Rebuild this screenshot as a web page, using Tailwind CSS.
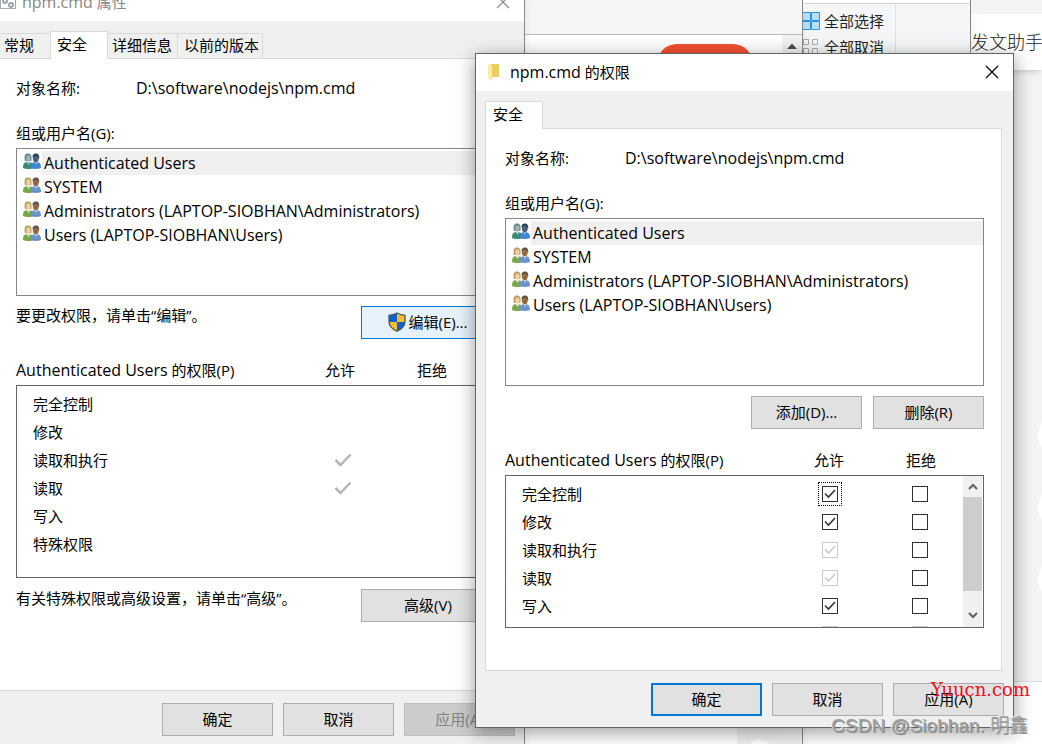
<!DOCTYPE html>
<html lang="zh-CN">
<head>
    <meta charset="UTF-8">
    <meta name="viewport" content="width=device-width, initial-scale=1.0">
    <title>npm.cmd 的权限</title>
    <script src="https://cdn.jsdelivr.net/npm/@tailwindcss/browser@4"></script>
</head>
<body class="relative h-screen overflow-hidden bg-[#f3f4f6] font-['Open_Sans','Noto_Sans_CJK_SC',sans-serif] text-[15px] leading-5 text-black">

    <!-- Shared icons -->
    <svg class="hidden">
        <symbol id="icon-users" viewBox="0 0 18 16">
            <path d="M0 15c0-4 1-6 5-6s6 2 6 6c-3 1.300-8 1.300-11 0z" fill="#7aa650"></path>
            <path d="M3.500 9l2 3 2-3z" fill="#dfe9cf"></path>
            <path d="M2 8C.8 3 2 .5 5 .5S9.200 3 8.300 8z" fill="#b99c55"></path>
            <ellipse cx="5.400" cy="5.500" rx="2.200" ry="3.200" fill="#efcfa6"></ellipse>
            <path d="M8 15c0-4 1-6 4.800-6S18 11 18 15c-3 1.300-7 1.300-10 0z" fill="#6a93cb"></path>
            <path d="M11.500 9l1.500 3 1.500-3z" fill="#c9dcf2"></path>
            <ellipse cx="12.800" cy="5.200" rx="2.900" ry="4" fill="#96683f"></ellipse>
            <path d="M9.300 4.500C9.500 1.500 11 .3 13 .5c2.500 0 3.700 2 3.200 5.500-.7-2-2-3-3.700-3.200-1.200 0-2 .7-3.200 1.700z" fill="#5d544c"></path>
        </symbol>
        <symbol id="icon-users-selected" viewBox="0 0 18 16">
            <path d="M0 15c0-4 1-6 5-6s6 2 6 6c-3 1.300-8 1.300-11 0z" fill="#40897a"></path>
            <path d="M3.500 9l2 3 2-3z" fill="#9fc5cf"></path>
            <path d="M2 8C.8 3 2 .5 5 .5S9.200 3 8.300 8z" fill="#64877f"></path>
            <ellipse cx="5.400" cy="5.500" rx="2.200" ry="3.200" fill="#9fb0b8"></ellipse>
            <path d="M8 15c0-4 1-6 4.800-6S18 11 18 15c-3 1.300-7 1.300-10 0z" fill="#3f86cf"></path>
            <path d="M11.500 9l1.500 3 1.500-3z" fill="#8fc0ec"></path>
            <ellipse cx="12.800" cy="5.200" rx="2.900" ry="4" fill="#4b6077"></ellipse>
            <path d="M9.300 4.500C9.500 1.500 11 .3 13 .5c2.500 0 3.700 2 3.200 5.500-.7-2-2-3-3.700-3.200-1.200 0-2 .7-3.200 1.700z" fill="#24415c"></path>
        </symbol>
        <symbol id="icon-close" viewBox="0 0 14 14">
            <path d="M1 1l12 12M13 1L1 13" fill="none" stroke="currentColor" stroke-width="1.200"></path>
        </symbol>
        <symbol id="icon-check" viewBox="0 0 12 10">
            <path d="M1 4.500l3.500 3.500L11 1" fill="none" stroke="currentColor" stroke-width="1.600"></path>
        </symbol>
    </svg>

    <!-- Web page at the back -->
    <div class="absolute inset-0 flex flex-col">
        <div class="mt-3.5 flex h-14 items-center justify-end bg-white shadow-md">
            <div class="w-[71px] overflow-hidden text-lg font-light whitespace-nowrap text-[#222]">发文助手</div>
        </div>
        <div class="flex flex-1 flex-col items-end gap-8 overflow-hidden pt-[345px]">
            <div class="-mr-9 size-10 rounded-full bg-white"></div>
            <div class="-mr-9 size-10 rounded-full bg-white"></div>
            <div class="-mr-9 size-10 rounded-full bg-white"></div>
        </div>
        <div class="h-[63px] border-t border-[#ddd] bg-white"></div>
    </div>

    <!-- Explorer ribbon -->
    <div class="absolute top-0 left-[790px] flex h-24 w-[181px] flex-col border-r border-[#888] bg-[#f5f6f7] shadow-lg">
        <div class="h-1 border-b border-[#d5d5d5] bg-white"></div>
        <div class="flex flex-1 pl-3">
            <div class="flex w-[94px] flex-col border-r border-[#dfe0e1] text-[#222]">
                <button class="flex h-[26px] items-center gap-1 pt-2">
                    <svg viewBox="0 0 18 18" class="size-[18px]" fill="#b9e0fb" stroke="#2b93e0">
                        <path d="M.5.500h8v8h-8zM9.500.500h8v8h-8zM.5 9.500h8v8h-8zM9.500 9.500h8v8h-8z"></path>
                    </svg>
                    全部选择
                </button>
                <button class="flex h-[26px] items-center gap-1 pt-2">
                    <svg viewBox="0 0 18 18" class="size-[18px]" fill="#fafafa" stroke="#aaa">
                        <path d="M1.500 1.500h5v5h-5zM10.500 1.500h5v5h-5zM1.500 10.500h5v5h-5zM10.500 10.500h5v5h-5z"></path>
                    </svg>
                    全部取消
                </button>
            </div>
        </div>
    </div>

    <!-- Browser window -->
    <div class="absolute inset-y-0 left-[500px] flex w-[303px] flex-col border-r border-[#888] bg-white shadow-lg">
        <div class="h-[35px] border-b border-[#bbb] bg-[#f6f6f6]"></div>
        <div class="flex flex-1 justify-end">
            <div class="mt-[9px] mr-[29px] h-10 w-24 rounded-full bg-[#f4502f]"></div>
            <div class="w-5 bg-[#f1f1f1] pt-2">
                <svg viewBox="0 0 10 6" class="mx-auto h-1.5 w-2.5" fill="#505050"><path d="M0 6l5-5.500L10 6z"></path></svg>
            </div>
        </div>
        <div class="flex h-4 justify-end">
            <div class="flex w-[45px] items-end justify-center overflow-hidden bg-[#eef0f2]">
                <div class="-mb-6 size-7 rounded-full bg-white"></div>
            </div>
            <div class="w-5 bg-[#f1f1f1]"></div>
        </div>
    </div>

    <!-- Properties window -->
    <section class="absolute -top-[18px] -left-[14px] flex w-[539px] flex-col border border-[#888] bg-[#f0f0f0] shadow-lg">
        <header class="flex h-[38px] items-center bg-white pr-3.5 pl-[13px] text-[#888]">
            <svg viewBox="0 0 16 16" class="mr-1.5 size-4">
                <path d="M.5 1.500h15v13H.5z" fill="#fff" stroke="#aaa"></path>
                <circle cx="5" cy="7" r="2" fill="none" stroke="#9aa9b0" stroke-width="2"></circle>
                <circle cx="11" cy="11" r="2" fill="none" stroke="#9aa9b0" stroke-width="2"></circle>
            </svg>
            <h2 class="flex-1"><span class="text-base leading-5">npm.cmd</span> 属性</h2>
            <button aria-label="关闭"><svg class="size-3.5"><use href="#icon-close"></use></svg></button>
        </header>
        <nav class="mt-2.5 -mb-px flex h-7 items-end pl-[11px]">
            <button class="h-[26px] w-[52px] border border-r-0 border-[#d9d9d9] pb-0.5 pl-[5px] text-left">常规</button>
            <button class="z-10 h-7 w-[58px] border border-b-0 border-[#d9d9d9] bg-white pb-1 pl-1.5 text-left">安全</button>
            <button class="h-[26px] w-[70px] border border-l-0 border-[#d9d9d9] pb-0.5 pl-1 text-left whitespace-nowrap">详细信息</button>
            <button class="h-[26px] w-[85px] border border-l-0 border-[#d9d9d9] pb-0.5 pl-1.5 text-left whitespace-nowrap">以前的版本</button>
        </nav>
        <div class="mr-[11px] ml-[9px] flex h-[633px] flex-col border border-[#d9d9d9] bg-white pt-[19px] pr-[17px] pl-[19px]">
            <div class="flex"><span class="w-[120px]">对象名称:</span><span class="text-base leading-5">D:\software\nodejs\npm.cmd</span></div>
            <div class="mt-[25px]">组或用户名(G):</div>
            <ul class="user-list mt-[5px] h-[148px] border border-[#828790] pt-0.5 pl-1.5"></ul>
            <div class="mt-2.5 flex items-start justify-between">
                <span class="leading-[18px]">要更改权限，请单击“编辑”。</span>
                <button class="flex h-[33px] w-[134px] items-center justify-center border border-[#0078d7] bg-[#e5f1fb] pb-0.5">
                    <svg viewBox="0 0 18 20" class="mr-0.5 h-5 w-[18px]">
                        <path d="M9 1C6.500 2.500 4 3.200 1 3.300V9.500c0 4.500 3 7.500 8 9.700z" fill="#0a63c9"></path>
                        <path d="M9 1c2.500 1.500 5 2.200 8 2.300V9.500c0 4.500-3 7.500-8 9.700z" fill="#fdbb2f"></path>
                        <path d="M9 10H1c.2 4.500 3 7 8 9.200z" fill="#fdbb2f"></path>
                        <path d="M9 10h8c-.2 4.500-3 7-8 9.200z" fill="#0a63c9"></path>
                        <path d="M9 1C6.500 2.500 4 3.200 1 3.300V9.500c0 4.500 3 7.500 8 9.700 5-2.200 8-5.200 8-9.700V3.300C14 3.200 11.500 2.500 9 1z" fill="none" stroke="#4c5864" stroke-width="1.300"></path>
                    </svg>
                    编辑(E)...
                </button>
            </div>
            <div class="mt-[21px] flex pr-[17px] text-center">
                <span class="flex-1 text-left"><span class="text-base leading-5">Authenticated Users</span> 的权限(P)</span>
                <span class="w-[92px]">允许</span>
                <span class="w-[92px]">拒绝</span>
            </div>
            <div class="mt-[5px] h-[193px] border border-[#646464] pt-1 pr-[18px]">
                <table class="w-full table-fixed">
                    <tbody id="effective-rows"></tbody>
                </table>
            </div>
            <div class="mt-[11px] flex items-start justify-between">
                <span class="leading-[18px]">有关特殊权限或高级设置，请单击“高级”。</span>
                <button class="h-[33px] w-[134px] border border-[#adadad] bg-[#e1e1e1] pb-0.5">高级(V)</button>
            </div>
        </div>
        <footer class="mt-3 mb-5 flex justify-end gap-2.5 pr-[9px]">
            <button class="h-[33px] w-[111px] border border-[#adadad] bg-[#e1e1e1] pb-0.5">确定</button>
            <button class="h-[33px] w-[111px] border border-[#adadad] bg-[#e1e1e1] pb-0.5">取消</button>
            <button class="h-[33px] w-[111px] border border-[#bfbfbf] bg-[#ccc] pb-0.5 text-[#838383]" disabled>应用(A)</button>
        </footer>
    </section>

    <!-- Permissions dialog -->
    <section class="absolute top-[53px] left-[475px] flex w-[539px] flex-col border border-[#646464] bg-[#f0f0f0] shadow-[0_4px_18px_rgba(0,0,0,0.4)]">
        <header class="flex h-[37px] items-center bg-white pr-3.5 pb-0.5 pl-3">
            <svg viewBox="0 0 12 18" class="mr-2.5 h-[18px] w-3">
                <path d="M3 1h8v12l1 1H3z" fill="#f0cb60"></path>
                <path d="M0 1l4 2v15l-4-3z" fill="#fde9a3"></path>
            </svg>
            <h2 class="flex-1"><span class="text-base leading-5">npm.cmd</span> 的权限</h2>
            <button aria-label="关闭"><svg class="size-3.5"><use href="#icon-close"></use></svg></button>
        </header>
        <nav class="mt-2.5 -mb-px flex h-7 items-end pl-[9px]">
            <button class="z-10 h-7 w-[58px] border border-b-0 border-[#d9d9d9] bg-white pb-1 pl-[7px] text-left">安全</button>
        </nav>
        <div class="mr-[11px] ml-[9px] flex flex-col border border-[#d9d9d9] bg-white pt-[19px] pr-[17px] pb-[42px] pl-[19px]">
            <div class="flex"><span class="w-[120px]">对象名称:</span><span class="text-base leading-5">D:\software\nodejs\npm.cmd</span></div>
            <div class="mt-[25px]">组或用户名(G):</div>
            <ul class="user-list mt-[5px] h-[168px] border border-[#828790] pt-0.5 pl-1.5"></ul>
            <div class="mt-2.5 flex justify-end gap-[11px]">
                <button class="h-[33px] w-[111px] border border-[#adadad] bg-[#e1e1e1] pb-0.5">添加(D)...</button>
                <button class="h-[33px] w-[111px] border border-[#adadad] bg-[#e1e1e1] pb-0.5">删除(R)</button>
            </div>
            <div class="mt-[21px] flex pr-[17px] text-center">
                <span class="flex-1 text-left"><span class="text-base leading-5">Authenticated Users</span> 的权限(P)</span>
                <span class="w-[92px]">允许</span>
                <span class="w-[92px]">拒绝</span>
            </div>
            <div class="mt-[5px] flex h-[153px] overflow-hidden border border-[#646464]">
                <div class="flex-1 pt-1">
                    <table class="w-full table-fixed">
                        <tbody id="permission-rows"></tbody>
                    </table>
                </div>
                <div class="mr-px flex w-[19px] flex-col items-center bg-[#f0f0f0] text-[#606060]">
                    <svg viewBox="0 0 10 7" class="my-[7px] h-[7px] w-2.5 shrink-0" fill="none" stroke="currentColor" stroke-width="2"><path d="M1 6l4-4 4 4"></path></svg>
                    <div class="h-[94px] w-full bg-[#cdcdcd]"></div>
                    <svg viewBox="0 0 10 7" class="mt-auto mb-2 h-[7px] w-2.5 shrink-0" fill="none" stroke="currentColor" stroke-width="2"><path d="M1 1l4 4 4-4"></path></svg>
                </div>
            </div>
        </div>
        <footer class="mt-3 mb-[11px] flex justify-end gap-2.5 pr-[9px]">
            <button class="h-[33px] w-[111px] border-2 border-[#0078d7] bg-[#e1e1e1] pb-0.5">确定</button>
            <button class="h-[33px] w-[111px] border border-[#adadad] bg-[#e1e1e1] pb-0.5">取消</button>
            <button class="h-[33px] w-[111px] border border-[#adadad] bg-[#e1e1e1] pb-0.5">应用(A)</button>
        </footer>
    </section>

    <!-- Watermarks -->
    <div class="absolute right-3 bottom-[42px] font-['DejaVu_Serif',serif] text-lg leading-6 text-[#f01020]">Yuucn.com</div>
    <div class="absolute right-3.5 bottom-1.5 font-['Liberation_Sans','Noto_Sans_CJK_SC',sans-serif] text-[19px] leading-6 font-light text-[#a0a0a0] [text-shadow:1px_1px_0_#888,-1px_-1px_0_#eee]">CSDN @Siobhan. 明鑫</div>

    <template id="user-template">
        <li class="flex h-6 items-start">
            <svg class="mt-0.5 mr-px h-4 w-[18px]"><use></use></svg>
            <span class="h-6 flex-1 pt-px pl-0.5 text-base leading-[22px]"></span>
        </li>
    </template>

    <template id="permission-template">
        <tr class="h-7">
            <th class="p-0 pl-4 text-left font-normal" scope="row"></th>
            <td class="allow w-[94px] p-0"></td>
            <td class="deny w-[86px] p-0"></td>
        </tr>
    </template>

    <script>
        const users = [
            'Authenticated Users',
            'SYSTEM',
            'Administrators (LAPTOP-SIOBHAN\\Administrators)',
            'Users (LAPTOP-SIOBHAN\\Users)'
        ];

        const effective = [
            { name: '完全控制', allow: false },
            { name: '修改', allow: false },
            { name: '读取和执行', allow: true },
            { name: '读取', allow: true },
            { name: '写入', allow: false },
            { name: '特殊权限', allow: false }
        ];

        const permissions = [
            { name: '完全控制', allow: true, focus: true },
            { name: '修改', allow: true },
            { name: '读取和执行', allow: true, inherited: true },
            { name: '读取', allow: true, inherited: true },
            { name: '写入', allow: true },
            { name: '', allow: false, inherited: true, denyLocked: true }
        ];

        function renderUsers() {
            const template = document.getElementById('user-template');
            document.querySelectorAll('.user-list').forEach(list => {
                users.forEach((name, index) => {
                    const clone = template.content.cloneNode(true);
                    const label = clone.querySelector('span');
                    label.textContent = name;
                    if (index === 0) label.classList.add('bg-[#f0f0f0]');
                    clone.querySelector('use').setAttribute('href', index === 0 ? '#icon-users-selected' : '#icon-users');
                    list.appendChild(clone);
                });
            });
        }

        function checkbox(label, checked, disabled, focus) {
            return `
                <label class="mx-auto grid size-6 place-items-center ${focus ? 'border border-dotted border-black' : ''}">
                    <input type="checkbox" aria-label="${label}" class="peer col-start-1 row-start-1 size-4 appearance-none border border-[#333] bg-white disabled:border-[#ccc]" ${checked ? 'checked' : ''} ${disabled ? 'disabled' : ''}>
                    <svg class="invisible col-start-1 row-start-1 h-2.5 w-3 text-[#333] peer-checked:visible peer-disabled:text-[#ccc]"><use href="#icon-check"></use></svg>
                </label>`;
        }

        function renderRows(targetId, rows, editable) {
            const template = document.getElementById('permission-template');
            const target = document.getElementById(targetId);
            rows.forEach(row => {
                const clone = template.content.cloneNode(true);
                clone.querySelector('th').textContent = row.name;
                if (editable) {
                    clone.querySelector('.allow').innerHTML = checkbox(`${row.name} 允许`, row.allow, row.inherited, row.focus);
                    clone.querySelector('.deny').innerHTML = checkbox(`${row.name} 拒绝`, false, row.denyLocked, false);
                } else if (row.allow) {
                    clone.querySelector('.allow').innerHTML = '<svg viewBox="0 0 18 14" class="mx-auto h-3.5 w-[18px] text-[#b5b5b5]" fill="none" stroke="currentColor" stroke-width="2.500"><path d="M1.500 7l5 5L16.500 1.500"></path></svg>';
                }
                target.appendChild(clone);
            });
        }

        renderUsers();
        renderRows('effective-rows', effective, false);
        renderRows('permission-rows', permissions, true);
    </script>
</body>
</html>
